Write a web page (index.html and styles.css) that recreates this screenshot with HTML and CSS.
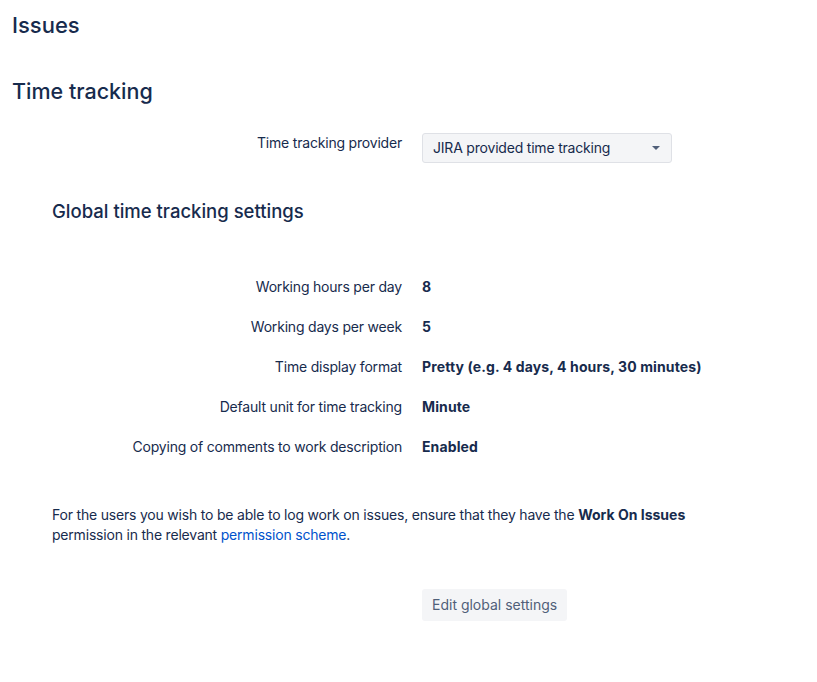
FILE: index.html
```html
<!DOCTYPE html>
<html lang="en">
<head>
  <meta charset="UTF-8">
  <meta name="viewport" content="width=device-width, initial-scale=1.0">
  <title>Time tracking</title>
  <link rel="stylesheet" href="styles.css">
</head>
<body>
  <h1 class="page-title">Issues</h1>
  <h2 class="section-title">Time tracking</h2>

  <div class="field-row provider-row">
    <label class="field-label" for="provider">Time tracking provider</label>
    <div class="select" id="provider">
      <span>JIRA provided time tracking</span>
      <span class="caret"></span>
    </div>
  </div>

  <div class="settings">
    <h3 class="settings-title">Global time tracking settings</h3>

    <div class="settings-list">
      <div class="field-row">
        <div class="field-label">Working hours per day</div>
        <div class="field-value">8</div>
      </div>
      <div class="field-row">
        <div class="field-label">Working days per week</div>
        <div class="field-value">5</div>
      </div>
      <div class="field-row">
        <div class="field-label">Time display format</div>
        <div class="field-value">Pretty (e.g. 4 days, 4 hours, 30 minutes)</div>
      </div>
      <div class="field-row">
        <div class="field-label">Default unit for time tracking</div>
        <div class="field-value">Minute</div>
      </div>
      <div class="field-row">
        <div class="field-label">Copying of comments to work description</div>
        <div class="field-value">Enabled</div>
      </div>
    </div>

    <p class="note">For the users you wish to be able to log work on issues, ensure that they have the <strong>Work On Issues</strong> permission in the relevant <a href="#">permission scheme</a>.</p>
  </div>

  <div class="field-row actions">
    <div></div>
    <div><button class="button">Edit global settings</button></div>
  </div>
</body>
</html>
```

FILE: styles.css
```css
body {
  margin: 0;
  padding: 0 12px;
  font-family: Inter, "Noto Sans", sans-serif;
  font-size: 14px;
  line-height: 20px;
  letter-spacing: -0.2px;
  color: #172b4d;
  background: #fff;
}
.page-title {
  margin: 0;
  padding-top: 11px;
  font-size: 22px;
  line-height: 28px;
  font-weight: 500;
  letter-spacing: 0;
}
.section-title {
  margin: 38px 0 0;
  font-size: 21.5px;
  line-height: 28px;
  font-weight: 500;
  letter-spacing: 0;
}
.field-row {
  display: grid;
  grid-template-columns: 390px 1fr;
  column-gap: 20px;
  align-items: start;
}
.field-label {
  text-align: right;
}
.provider-row {
  margin-top: 28px;
}
.select {
  display: flex;
  align-items: center;
  justify-content: space-between;
  box-sizing: border-box;
  width: 250px;
  height: 30px;
  padding: 0 10px;
  background: #f4f5f7;
  border: 1px solid #dfe1e6;
  border-radius: 3px;
}
.caret {
  width: 0;
  height: 0;
  border-left: 4px solid transparent;
  border-right: 4px solid transparent;
  border-top: 4px solid #505f79;
  margin-right: 1px;
}
.settings {
  padding-left: 40px;
}
.settings-title {
  margin: 36px 0 0;
  font-size: 18.5px;
  line-height: 24px;
  font-weight: 500;
  letter-spacing: 0;
}
.settings-list {
  margin-top: 54px;
  margin-left: -40px;
}
.settings-list .field-row {
  height: 40px;
}
.field-value {
  font-weight: 700;
  letter-spacing: 0.12px;
}
.note {
  margin: 28px 0 0;
  max-width: 660px;
}
.note strong {
  font-weight: 700;
  letter-spacing: 0;
}
.note a {
  color: #0052cc;
  text-decoration: none;
}
.actions {
  margin-top: 44px;
}
.button {
  font: inherit;
  letter-spacing: 0;
  color: #505f79;
  background: #f4f5f7;
  border: none;
  border-radius: 3px;
  height: 32px;
  padding: 0 10px;
}
```
